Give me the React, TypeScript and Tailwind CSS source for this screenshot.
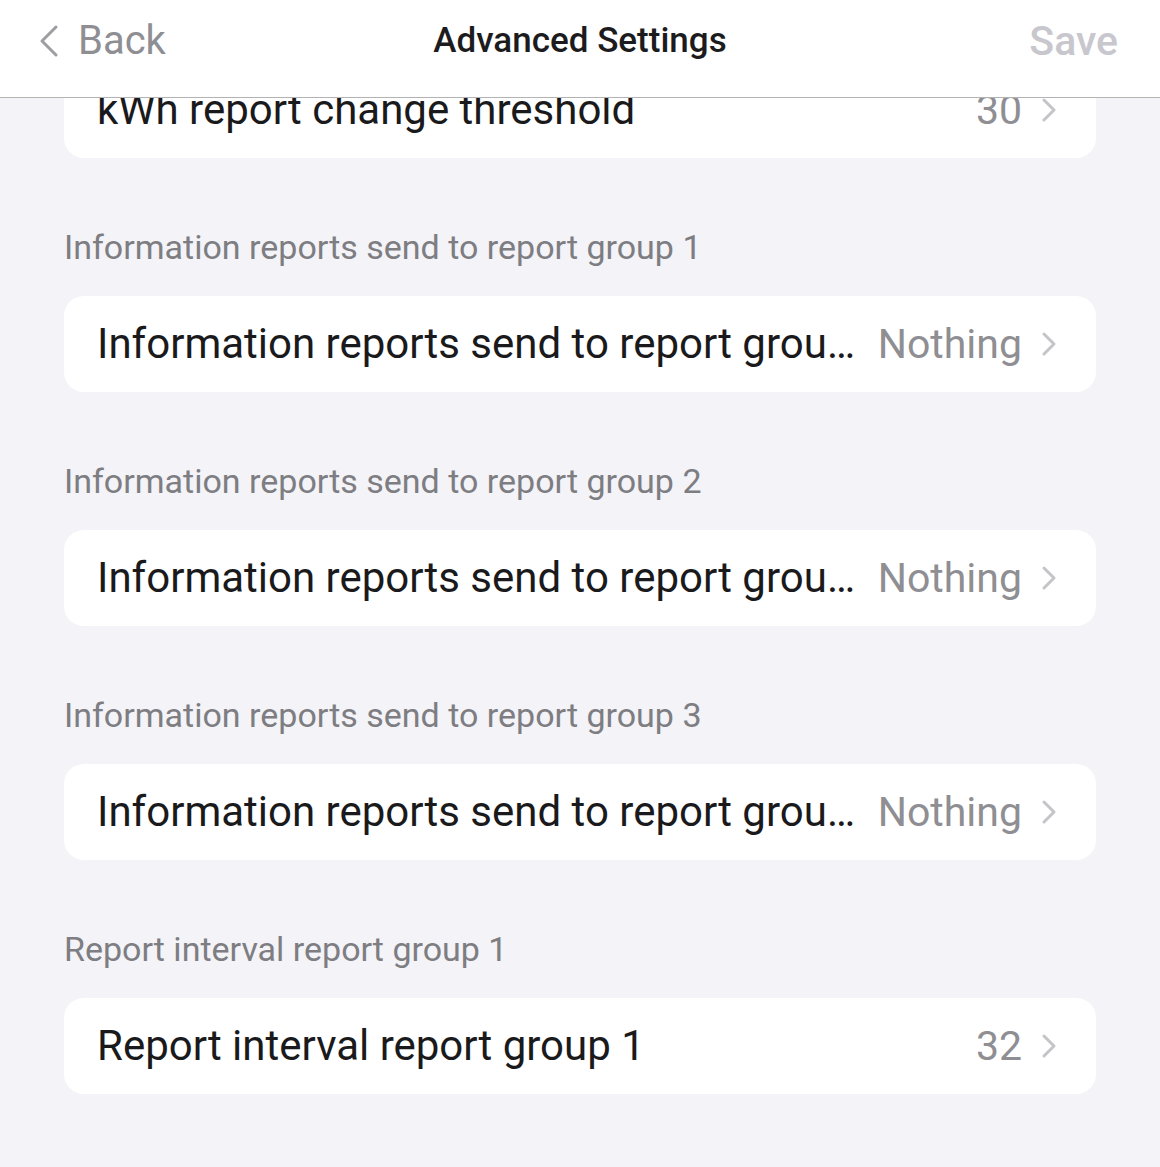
import React from "react";

const Chevron = () => (
  <svg width="16" height="26" viewBox="0 0 16 26" fill="none" className="shrink-0">
    <path d="M3 3 L13 13 L3 23" stroke="#c4c4c9" strokeWidth="3" strokeLinecap="round" strokeLinejoin="round" />
  </svg>
);

const Row = ({ title, value }: { title: string; value: string }) => (
  <div className="flex h-[96px] items-center rounded-[20px] bg-white pl-[33px] pr-[39px]">
    <span className="min-w-0 flex-1 truncate text-[42px] leading-[48px] text-[#1a1a1c]">{title}</span>
    <span className="ml-5 shrink-0 text-[41px] leading-[48px] text-[#8e8e93]">{value}</span>
    <span className="ml-[19px] flex items-center">
      <Chevron />
    </span>
  </div>
);

const Section = ({ label, title, value }: { label: string; title: string; value: string }) => (
  <div className="pt-[69px]">
    <div className="text-[34px] leading-[40px] text-[#7d7d82]">{label}</div>
    <div className="mt-[29px]">
      <Row title={title} value={value} />
    </div>
  </div>
);

export default function App() {
  return (
    <div
      className="flex h-[1167px] w-[1160px] flex-col overflow-hidden bg-[#f3f3f8]"
      style={{ fontFamily: "Roboto, 'Noto Sans', sans-serif" }}
    >
      <div className="relative z-10 flex h-[98px] shrink-0 items-start border-b border-[#b3b3b3] bg-white pl-[38px] pr-[42px] pt-[17px]">
        <div className="flex h-[48px] flex-1 items-center">
          <svg width="22" height="34" viewBox="0 0 22 34" fill="none">
            <path d="M18 3 L4 17 L18 31" stroke="#9d9da2" strokeWidth="3" strokeLinecap="round" strokeLinejoin="round" />
          </svg>
          <span className="ml-[18px] text-[40px] leading-[48px] text-[#8e8e93]">Back</span>
        </div>
        <div className="absolute left-0 right-0 top-[17px] flex h-[48px] items-center justify-center">
          <span className="text-[35px] font-medium leading-[48px] text-[#1c1c1e]">Advanced Settings</span>
        </div>
        <span className="relative text-[41px] font-medium leading-[48px] text-[#c7c7cd]">Save</span>
      </div>
      <div className="flex-1 overflow-hidden">
        <div className="-mt-[36px] px-[64px]">
          <Row title="kWh report change threshold" value="30" />
          <Section
            label="Information reports send to report group 1"
            title="Information reports send to report group 1"
            value="Nothing"
          />
          <Section
            label="Information reports send to report group 2"
            title="Information reports send to report group 2"
            value="Nothing"
          />
          <Section
            label="Information reports send to report group 3"
            title="Information reports send to report group 3"
            value="Nothing"
          />
          <Section label="Report interval report group 1" title="Report interval report group 1" value="32" />
        </div>
      </div>
    </div>
  );
}
